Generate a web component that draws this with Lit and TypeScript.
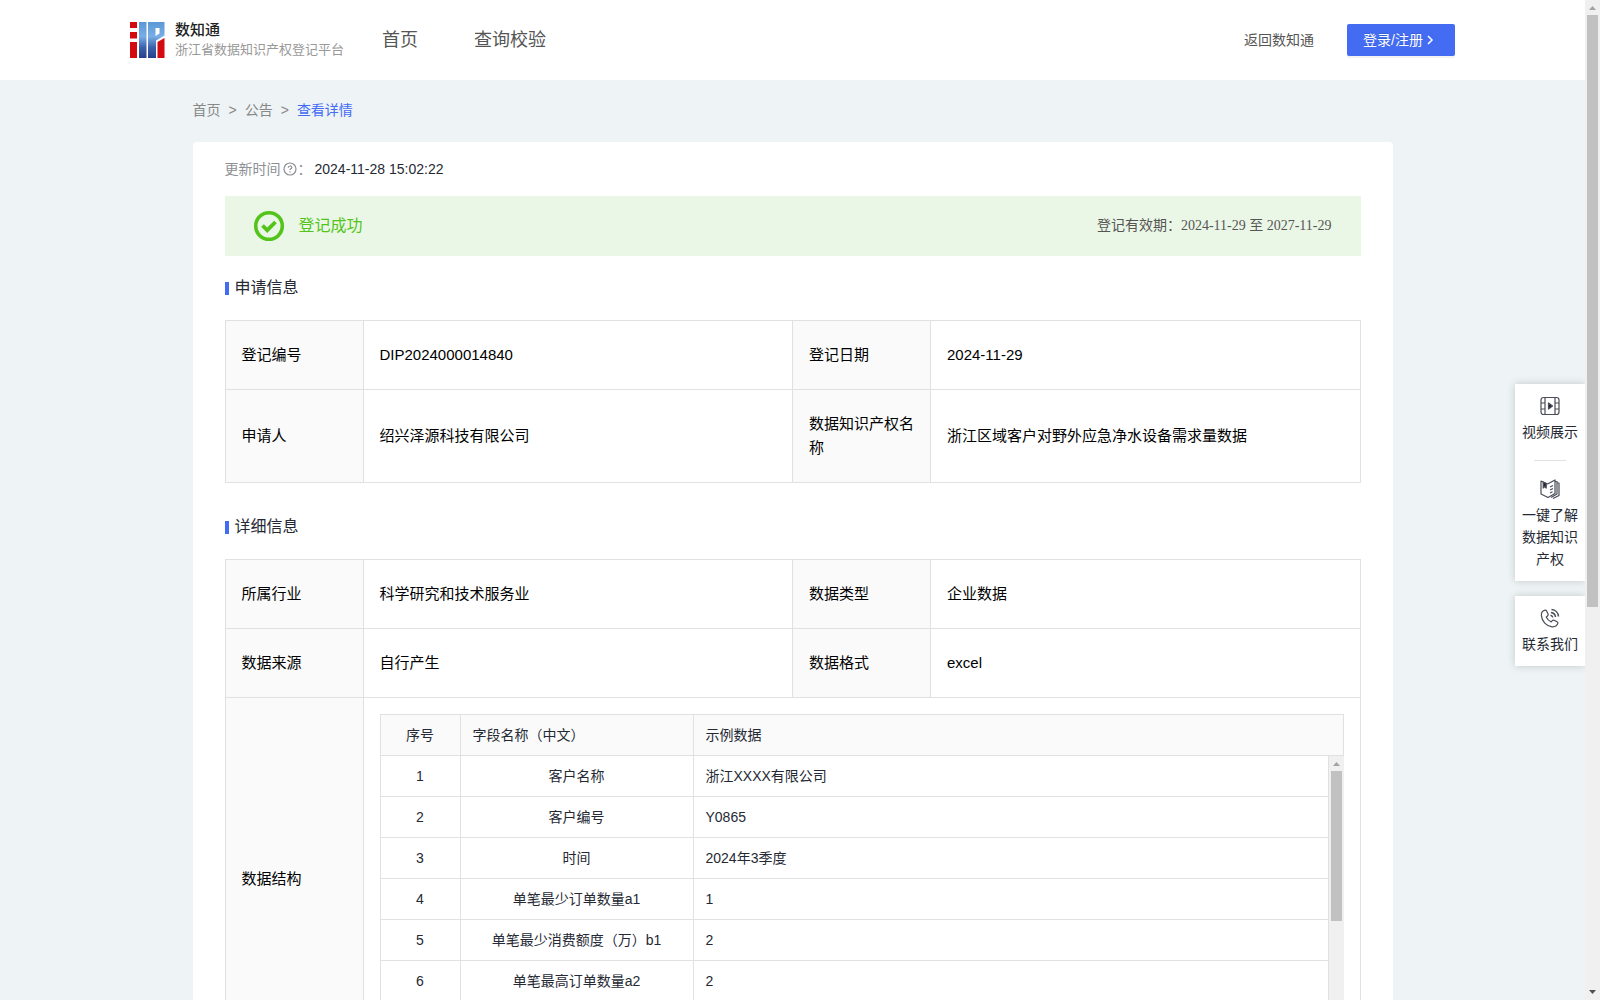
import { LitElement, html, css, svg } from "lit";
import { customElement, property } from "lit/decorators.js";

const SAMPLE_FIELDS: [string, string][] = [
  ["客户名称", "浙江XXXX有限公司"],
  ["客户编号", "Y0865"],
  ["时间", "2024年3季度"],
  ["单笔最少订单数量a1", "1"],
  ["单笔最少消费额度（万）b1", "2"],
  ["单笔最高订单数量a2", "2"],
];

const videoIcon = svg`
  <rect x="1" y="1.500" width="18" height="17" rx="2.500"/>
  <path d="M5 1.500v17M15 1.500v17M1 7h4M1 13h4M15 7h4M15 13h4"/>
  <path d="M8.500 7v6l4-3z" fill="#1f2330"/>`;

const bookIcon = svg`
  <path d="M1 2l6.500 3L15 1v13.500L8 18.500 1 15z"/>
  <path d="M3.200 3v6l1.500-1.500L6.200 9V4.500z" fill="#1f2330"/>
  <path d="M10 8l3-1.500M10 11l3-1.500M10 14l2.500-1.200"/>
  <path d="M15 2.500h2v12.500l-6 3.500M17 4h2v12.500l-6 3"/>`;

const phoneIcon = svg`
  <path d="M5.200 2.200c-2.600.6-4 2.800-3.800 5.400.4 5.600 5 10.600 10.600 11.200 2.600.2 4.800-.8 5.800-3.200.3-.8 0-1.400-.7-1.800l-3-1.600c-.7-.3-1.300-.2-1.800.4l-1.100 1.300c-2.400-1-3.900-2.600-4.900-4.900l1.400-1.200c.6-.5.7-1.100.4-1.800L6.600 3c-.3-.6-.7-.9-1.400-.8z"/>
  <path d="M11 4.500c2.500.3 4.200 2 4.500 4.500M11.500 1.500c4 .3 6.800 3.200 7 7M10.500 7.200c1.200.2 2 1 2.300 2.200" stroke-width="1.500"/>`;

@customElement("scroll-rail")
export class ScrollRail extends LitElement {
  @property({ type: Number }) size = 50;

  static styles = css`
    :host {
      display: flex;
      flex-direction: column;
      flex: 0 0 15px;
      background: #f0f0f0;
    }
    .arrow { display: block; width: 15px; height: 15px; }
    .track { flex: 1; }
    .thumb { margin: 0 2px; background: #c1c1c1; }
  `;

  render() {
    return html`
      <svg class="arrow" viewBox="0 0 15 15" aria-hidden="true"><path d="M4 10h7L7.500 6z" fill="#a3a3a3"/></svg>
      <div class="track"><div class="thumb" style="height:${this.size}%"></div></div>
      <svg class="arrow" viewBox="0 0 15 15" aria-hidden="true"><path d="M4 5h7L7.500 9z" fill="#505050"/></svg>
    `;
  }
}

@customElement("field-table")
export class FieldTable extends LitElement {
  static styles = css`
    :host { display: block; }
    table {
      width: 100%;
      table-layout: fixed;
      border-collapse: collapse;
      font-size: 14px;
      line-height: 20px;
      color: #252934;
    }
    th, td {
      padding: 10px 12px;
      border: 1px solid #e1e1e1;
      font-weight: 400;
      text-align: left;
    }
    th { background: #fafafa; }
    .index { width: 80px; box-sizing: border-box; text-align: center; }
    .name { width: 233px; box-sizing: border-box; }
    td.name { text-align: center; }
    .scroller { display: flex; height: 288px; overflow: hidden; }
    .rows { flex: 1; min-width: 0; }
    .rows tr:first-child td { border-top: 0; }
  `;

  render() {
    return html`
      <table>
        <thead>
          <tr>
            <th class="index" scope="col">序号</th>
            <th class="name" scope="col">字段名称（中文）</th>
            <th scope="col">示例数据</th>
          </tr>
        </thead>
      </table>
      <div class="scroller">
        <div class="rows">
          <table>
            <tbody>
              ${SAMPLE_FIELDS.map(
                ([name, sample], i) => html`
                  <tr>
                    <td class="index">${i + 1}</td>
                    <td class="name">${name}</td>
                    <td>${sample}</td>
                  </tr>
                `,
              )}
            </tbody>
          </table>
        </div>
        <scroll-rail .size=${58}></scroll-rail>
      </div>
    `;
  }
}

@customElement("app-root")
export class AppRoot extends LitElement {
  static styles = css`
    :host {
      display: flex;
      position: relative;
      height: 100vh;
      overflow: hidden;
      background: #eef3f6;
      font-family: "Liberation Sans", "Noto Sans CJK SC", sans-serif;
      font-size: 14px;
      line-height: 20px;
      color: #252934;
    }
    a { color: inherit; text-decoration: none; }
    .page {
      flex: 1;
      min-width: 0;
      overflow-y: auto;
      scrollbar-width: none;
    }
    .header {
      display: flex;
      align-items: center;
      height: 80px;
      padding: 0 130px;
      background: #fff;
      color: #555;
    }
    .brand { display: flex; align-items: center; gap: 10px; width: 252px; }
    .brand-mark { display: block; width: 35px; height: 36px; }
    .brand-name { font-size: 15px; font-weight: 500; color: #222; }
    .brand-sub { font-size: 13px; line-height: 20px; color: #999; white-space: nowrap; }
    .nav { display: flex; flex: 1; gap: 56px; font-size: 18px; }
    .account { display: flex; align-items: center; gap: 33px; }
    .login {
      display: flex;
      align-items: center;
      gap: 1px;
      height: 32px;
      padding: 0 19px 0 16px;
      border: 0;
      border-radius: 2px;
      background: #436cf3;
      box-shadow: 0 2px 0 rgba(0, 0, 0, 0.05);
      font: inherit;
      color: #fff;
      text-shadow: 0 -1px 0 rgba(0, 0, 0, 0.12);
    }
    .login svg { display: block; width: 12px; height: 12px; }
    .main { max-width: 1200px; margin: 0 auto; }
    .crumbs {
      display: flex;
      gap: 8px;
      padding: 20px 0 22px;
      color: #888;
    }
    .crumbs .current { color: #436cf3; }
    .card { padding: 16px 32px 32px; border-radius: 4px; background: #fff; }
    .updated { display: flex; align-items: center; padding-bottom: 16px; color: #8d8f94; line-height: 22px; }
    .updated svg { display: block; width: 14px; height: 14px; margin: 0 1px 0 2px; }
    .updated time { margin-left: 3px; color: #252934; }
    .banner {
      display: flex;
      align-items: center;
      gap: 14px;
      height: 60px;
      padding: 0 29px 0 28px;
      background: #ebf7e6;
    }
    .banner svg { display: block; width: 32px; height: 32px; }
    .banner-title { flex: 1; font-size: 16px; color: #52c41a; }
    .validity { font-family: "Liberation Serif", "Noto Sans CJK SC", serif; color: #555; }
    .section {
      display: flex;
      align-items: center;
      gap: 6px;
      margin: 0;
      padding: 20px 0;
      font-size: 16px;
      font-weight: 400;
      line-height: 24px;
    }
    .section::before { content: ""; width: 4px; height: 13px; background: #436cf3; }
    .details {
      width: 100%;
      table-layout: fixed;
      border-collapse: collapse;
      font-size: 15px;
      line-height: 24px;
      color: #000;
    }
    .details + .section { padding-top: 32px; }
    .details th, .details td {
      padding: 22px 16px;
      border: 1px solid #e1e1e1;
      font-weight: 400;
      text-align: left;
    }
    .details th { background: #fafafa; }
    .label-col { width: 138px; }
    .details .nested { padding: 16px; }
    .dock {
      position: absolute;
      top: 384px;
      right: 15px;
      display: flex;
      flex-direction: column;
      gap: 15px;
      width: 70px;
    }
    .dock-group { background: #fff; box-shadow: 0 0 8px rgba(0, 0, 0, 0.18); clip-path: inset(-10px 0 -10px -10px); }
    .dock-item {
      display: flex;
      flex-direction: column;
      align-items: center;
      gap: 5px;
      padding: 12px 7px 11px;
      line-height: 22px;
      text-align: center;
    }
    .dock-item svg {
      display: block;
      width: 20px;
      height: 20px;
      fill: none;
      stroke: #4a4d57;
      stroke-width: 1.200;
      stroke-linejoin: round;
    }
    .dock-line { width: 32px; height: 1px; margin: 6px auto; border: 0; background: #e1e1e1; }
  `;

  private dockItem(icon: unknown, text: string) {
    return html`<a class="dock-item" href="#"><svg viewBox="0 0 20 20" aria-hidden="true">${icon}</svg>${text}</a>`;
  }

  render() {
    return html`
      <div class="page">
        <header class="header">
          <div class="brand">
            <svg class="brand-mark" viewBox="0 0 35 36" aria-hidden="true">
              <defs>
                <linearGradient id="blue" x1="0" y1="0" x2="0" y2="36" gradientUnits="userSpaceOnUse">
                  <stop offset="0" stop-color="#5b97d6"/>
                  <stop offset=".4" stop-color="#79aee6"/>
                  <stop offset=".7" stop-color="#3c63ac"/>
                  <stop offset="1" stop-color="#25408c"/>
                </linearGradient>
              </defs>
              <path fill="#d30a10" d="M0 0h7v6H0zM0 10h7v6.500H0zM0 20h7v16H0zM27.500 20l7-4v20h-7z"/>
              <path fill="url(#blue)" d="M9 0h7.500v36H9z"/>
              <path fill="url(#blue)" fill-rule="evenodd" d="M18 0h16.500v13.500L26 18.500V36h-8zM25.500 6v8l4-2.500V6z"/>
            </svg>
            <div>
              <div class="brand-name">数知通</div>
              <div class="brand-sub">浙江省数据知识产权登记平台</div>
            </div>
          </div>
          <nav class="nav"><a href="#">首页</a><a href="#">查询校验</a></nav>
          <div class="account">
            <a href="#">返回数知通</a>
            <button class="login" type="button">
              登录/注册
              <svg viewBox="0 0 12 12" aria-hidden="true"><path d="M4 2l4 4-4 4" fill="none" stroke="#fff" stroke-width="1.500"/></svg>
            </button>
          </div>
        </header>

        <main class="main">
          <nav class="crumbs">
            <a href="#">首页</a><span>&gt;</span><a href="#">公告</a><span>&gt;</span><a class="current" href="#">查看详情</a>
          </nav>
          <div class="card">
            <div class="updated">
              更新时间
              <svg viewBox="0 0 14 14" fill="none" stroke="#8d8f94" aria-hidden="true">
                <circle cx="7" cy="7" r="6" stroke-width="1.200"/>
                <path d="M5.200 5.800c0-2.400 3.600-2.400 3.600-.2 0 1.200-1.800 1.300-1.800 2.500M7 9.300v1.200" stroke-width="1.200"/>
              </svg>：<time>2024-11-28 15:02:22</time>
            </div>
            <div class="banner">
              <svg viewBox="0 0 32 32" fill="none" stroke="#52c41a" aria-hidden="true">
                <circle cx="16" cy="16" r="13.300" stroke-width="3.600"/>
                <path d="M9.500 15.500l4.700 4.700 8.300-8.200" stroke-width="3.800"/>
              </svg>
              <span class="banner-title">登记成功</span>
              <span class="validity">登记有效期：2024-11-29 至 2027-11-29</span>
            </div>

            <h2 class="section">申请信息</h2>
            <table class="details">
              <colgroup><col class="label-col"><col><col class="label-col"><col></colgroup>
              <tbody>
                <tr>
                  <th scope="row">登记编号</th><td>DIP2024000014840</td>
                  <th scope="row">登记日期</th><td>2024-11-29</td>
                </tr>
                <tr>
                  <th scope="row">申请人</th><td>绍兴泽源科技有限公司</td>
                  <th scope="row">数据知识产权名称</th><td>浙江区域客户对野外应急净水设备需求量数据</td>
                </tr>
              </tbody>
            </table>

            <h2 class="section">详细信息</h2>
            <table class="details">
              <colgroup><col class="label-col"><col><col class="label-col"><col></colgroup>
              <tbody>
                <tr>
                  <th scope="row">所属行业</th><td>科学研究和技术服务业</td>
                  <th scope="row">数据类型</th><td>企业数据</td>
                </tr>
                <tr>
                  <th scope="row">数据来源</th><td>自行产生</td>
                  <th scope="row">数据格式</th><td>excel</td>
                </tr>
                <tr>
                  <th scope="row">数据结构</th>
                  <td class="nested" colspan="3"><field-table></field-table></td>
                </tr>
              </tbody>
            </table>
          </div>
        </main>
      </div>
      <scroll-rail .size=${61}></scroll-rail>

      <aside class="dock">
        <div class="dock-group">
          ${this.dockItem(videoIcon, "视频展示")}
          <hr class="dock-line">
          ${this.dockItem(bookIcon, "一键了解数据知识产权")}
        </div>
        <div class="dock-group">${this.dockItem(phoneIcon, "联系我们")}</div>
      </aside>
    `;
  }
}
